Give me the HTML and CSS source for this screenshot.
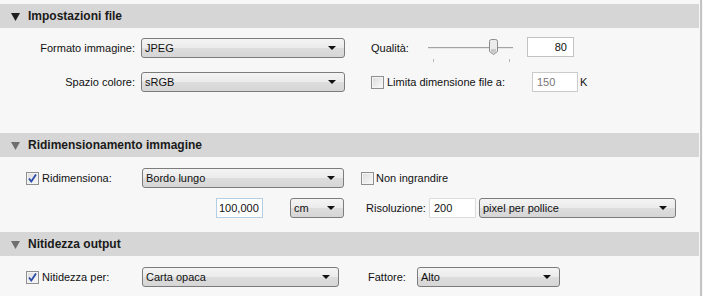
FILE: index.html
```html
<!DOCTYPE html>
<html lang="it">
<head>
    <meta charset="UTF-8">
    <title>Impostazioni esportazione</title>
    <link rel="stylesheet" href="styles.css">
</head>
<body>

    <div class="panel">

        <!-- Impostazioni file -->
        <div class="head">
            <svg class="caret" width="9" height="8" viewBox="0 0 9 8"><path d="M0 0H9L4.5 8Z" fill="#1e1e1e"/></svg>
            Impostazioni file
        </div>
        <div class="body body-file">
            <div class="row">
                <span class="lbl lbl-right">Formato immagine:</span>
                <div class="select sel-format">JPEG<span class="arrow"></span></div>
                <span class="lbl lbl-quality">Qualità:</span>
                <svg class="slider" width="85" height="24" viewBox="0 0 85 24">
                    <line x1="0" y1="8.5" x2="85" y2="8.5" stroke="#a4a4a4"/>
                    <line x1="0" y1="9.5" x2="85" y2="9.5" stroke="#e6e6e6"/>
                    <line x1="5.5" y1="20" x2="5.5" y2="23" stroke="#b4b4b4"/>
                    <line x1="81.5" y1="20" x2="81.5" y2="23" stroke="#b4b4b4"/>
                    <path d="M61.5 2.5Q61.5 0.5 63.5 0.5H67.5Q69.5 0.5 69.5 2.5V12.5L65.5 15.5L61.5 12.5Z" fill="#ececec" stroke="#8c8c8c"/>
                    <path d="M63 10V13L65.5 14.5L68 13V10Z" fill="#c8c8c8"/>
                </svg>
                <div class="field field-num sel-quality">80</div>
            </div>
            <div class="row row-second">
                <span class="lbl lbl-right">Spazio colore:</span>
                <div class="select sel-format">sRGB<span class="arrow"></span></div>
                <span class="check check-limit"></span>
                <span class="lbl lbl-limit">Limita dimensione file a:</span>
                <div class="field field-off">150</div>
                <span class="lbl lbl-k">K</span>
            </div>
        </div>

        <!-- Ridimensionamento immagine -->
        <div class="head">
            <svg class="caret" width="9" height="8" viewBox="0 0 9 8"><path d="M0 0H9L4.5 8Z" fill="#6e6e6e"/></svg>
            Ridimensionamento immagine
        </div>
        <div class="body body-resize">
            <div class="row">
                <span class="check checked"><svg width="11" height="11" viewBox="0 0 11 11"><path d="M2 5.5L4.3 8.5L9 1.5" fill="none" stroke="#2a4aa8" stroke-width="1.8"/></svg></span>
                <span class="lbl lbl-check">Ridimensiona:</span>
                <div class="select sel-edge">Bordo lungo<span class="arrow"></span></div>
                <span class="check check-noenlarge"></span>
                <span class="lbl">Non ingrandire</span>
            </div>
            <div class="row row-size">
                <div class="field field-focus">100,000</div>
                <div class="select sel-unit">cm<span class="arrow"></span></div>
                <span class="lbl lbl-res">Risoluzione:</span>
                <div class="field field-res">200</div>
                <div class="select sel-ppi">pixel per pollice<span class="arrow"></span></div>
            </div>
        </div>

        <!-- Nitidezza output -->
        <div class="head">
            <svg class="caret" width="9" height="8" viewBox="0 0 9 8"><path d="M0 0H9L4.5 8Z" fill="#6e6e6e"/></svg>
            Nitidezza output
        </div>
        <div class="body body-sharpen">
            <div class="row">
                <span class="check checked"><svg width="11" height="11" viewBox="0 0 11 11"><path d="M2 5.5L4.3 8.5L9 1.5" fill="none" stroke="#2a4aa8" stroke-width="1.8"/></svg></span>
                <span class="lbl lbl-check">Nitidezza per:</span>
                <div class="select sel-paper">Carta opaca<span class="arrow"></span></div>
                <span class="lbl lbl-factor">Fattore:</span>
                <div class="select sel-amount">Alto<span class="arrow"></span></div>
            </div>
        </div>

    </div>

</body>
</html>
```

FILE: styles.css
```css
body {
    margin: 0;
    width: 703px;
    height: 296px;
    overflow: hidden;
    background-color: #f7f7f7;
    font-family: "Liberation Sans", Arial, sans-serif;
    font-size: 11px;
    color: #111;
}

.panel {
    width: 700px;
    height: 296px;
    padding-top: 4px;
    box-sizing: border-box;
    border-right: 1px solid #f7f7f7;
    box-shadow: 2px 0 0 #c4c4c4;
}

.head {
    height: 24px;
    display: flex;
    align-items: center;
    background-color: #d6d6d6;
    font-size: 12px;
    font-weight: bold;
    color: #1a1a1a;
}

.caret {
    margin: 1px 8px 0 11px;
}

.body-file {
    padding: 10px 0 41px;
}

.body-resize {
    padding: 11px 0 14px;
}

.body-sharpen {
    padding: 11px 0 0;
}

.row {
    display: flex;
    align-items: center;
    height: 20px;
}

.row-second {
    margin-top: 14px;
}

.row-size {
    margin-top: 9px;
    height: 21px;
}

/* labels */
.lbl {
    white-space: nowrap;
}

.lbl-right {
    width: 135px;
    text-align: right;
    margin-right: 6px;
}

.lbl-quality {
    margin-left: 26px;
    width: 57px;
}

.lbl-limit {
    margin-left: 3px;
    width: 145px;
}

.lbl-k {
    margin-left: 2px;
}

.lbl-check {
    margin-left: 3px;
    width: 100px;
}

.lbl-res {
    margin-left: 22px;
    width: 63px;
}

.lbl-factor {
    margin-left: 29px;
    width: 49px;
}

/* drop-downs */
.select {
    position: relative;
    height: 20px;
    box-sizing: border-box;
    padding: 0 0 0 3px;
    line-height: 18px;
    border: 1px solid #7c7c7c;
    border-radius: 3px;
    background: linear-gradient(#f4f4f4 0%, #ebebeb 50%, #dddddd 51%, #d6d6d6 100%);
    white-space: nowrap;
}

.arrow {
    position: absolute;
    right: 8px;
    top: 7px;
    width: 0;
    height: 0;
    border-left: 4px solid transparent;
    border-right: 4px solid transparent;
    border-top: 4px solid #111;
}

.sel-format {
    width: 204px;
}

.sel-edge {
    width: 202px;
    margin-left: 0;
}

.sel-unit {
    width: 54px;
    margin-left: 27px;
}

.sel-ppi {
    width: 197px;
    margin-left: 3px;
}

.sel-paper {
    width: 197px;
}

.sel-amount {
    width: 143px;
    margin-left: 0;
}

/* slider */
.slider {
    display: block;
    margin-top: 6px;
}

/* text fields */
.field {
    height: 20px;
    box-sizing: border-box;
    padding: 0 4px;
    line-height: 18px;
    background-color: #fff;
    border: 1px solid #c3c3c3;
}

.field-num {
    width: 47px;
    margin-left: 14px;
    text-align: right;
    padding-right: 6px;
    margin-top: -2px;
}

.field-off {
    width: 46px;
    color: #777;
    border-color: #cbcbcb;
}

.field-focus {
    width: 47px;
    margin-left: 216px;
    border-color: #b3cde3;
    padding: 0 2px;
}

.field-res {
    width: 47px;
    border-color: #dcdcdc;
}

/* check boxes */
.check {
    display: flex;
    align-items: center;
    justify-content: center;
    width: 13px;
    height: 13px;
    box-sizing: border-box;
    border: 1px solid #8e8f8f;
    background: linear-gradient(135deg, #dcdcdc, #f9f9f9);
    box-shadow: inset 0 0 0 1px #f4f4f4;
}

.body-resize .check:first-child,
.body-sharpen .check:first-child {
    margin-left: 26px;
}

.check-limit {
    margin-left: 26px;
}

.check-noenlarge {
    margin-left: 17px;
    margin-right: 2px;
}
```
